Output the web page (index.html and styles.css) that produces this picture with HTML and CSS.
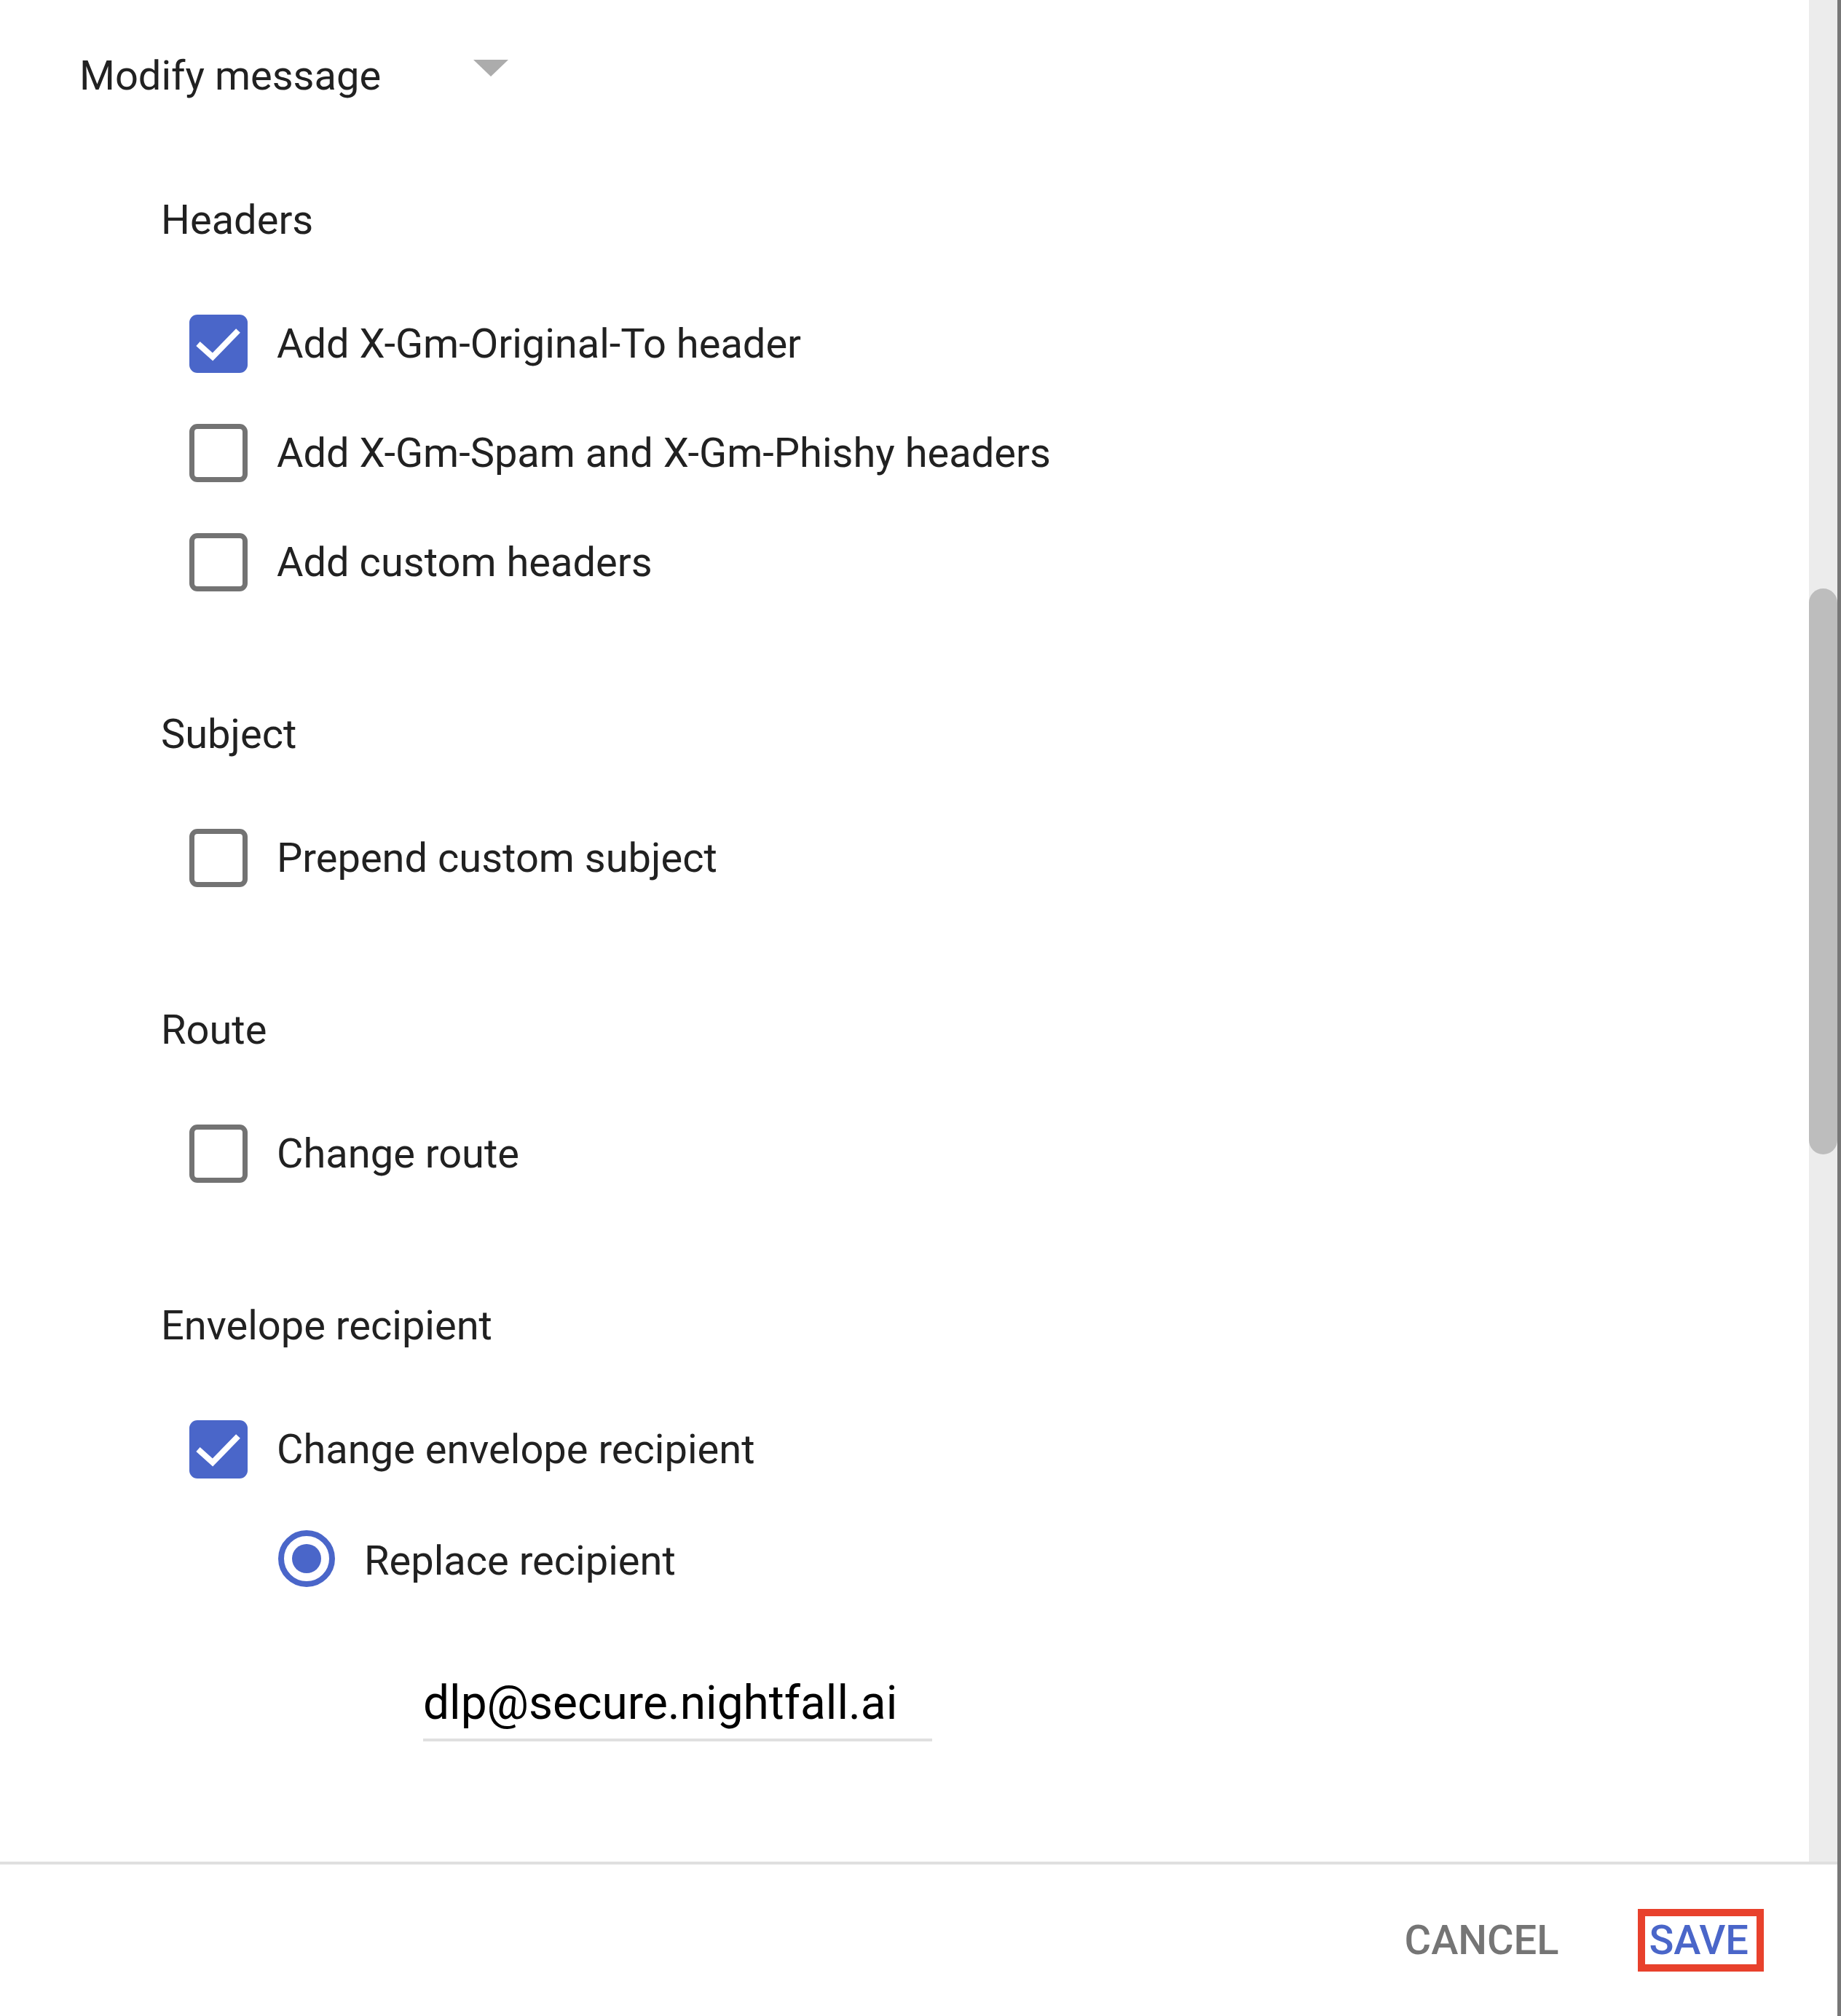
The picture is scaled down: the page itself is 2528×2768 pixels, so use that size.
FILE: index.html
```html
<!DOCTYPE html>
<html lang="en">
<head>
<meta charset="utf-8">
<title>Modify message</title>
<link rel="stylesheet" href="styles.css">
</head>
<body>
<div class="window">
  <div class="pane">
    <div class="scroller">
      <div class="content">
        <div class="title-row">
          <span class="title">Modify message</span>
          <span class="caret"></span>
        </div>

        <section class="section first">
          <div class="heading">Headers</div>
          <div class="options">
            <label class="row">
              <span class="box checked"><svg viewBox="0 0 80 80" width="80" height="80"><polyline points="12,40 32,58 67,22" fill="none" stroke="#fff" stroke-width="8"/></svg></span>
              <span class="label">Add X-Gm-Original-To header</span>
            </label>
            <label class="row">
              <span class="box"></span>
              <span class="label">Add X-Gm-Spam and X-Gm-Phishy headers</span>
            </label>
            <label class="row">
              <span class="box"></span>
              <span class="label">Add custom headers</span>
            </label>
          </div>
        </section>

        <section class="section">
          <div class="heading">Subject</div>
          <div class="options">
            <label class="row">
              <span class="box"></span>
              <span class="label">Prepend custom subject</span>
            </label>
          </div>
        </section>

        <section class="section">
          <div class="heading">Route</div>
          <div class="options">
            <label class="row">
              <span class="box"></span>
              <span class="label">Change route</span>
            </label>
          </div>
        </section>

        <section class="section">
          <div class="heading">Envelope recipient</div>
          <div class="options">
            <label class="row">
              <span class="box checked"><svg viewBox="0 0 80 80" width="80" height="80"><polyline points="12,40 32,58 67,22" fill="none" stroke="#fff" stroke-width="8"/></svg></span>
              <span class="label">Change envelope recipient</span>
            </label>
            <label class="row sub">
              <span class="radio"><span class="dot"></span></span>
              <span class="label sub-label">Replace recipient</span>
            </label>
            <div class="field">
              <span class="field-value">dlp@secure.nightfall.ai</span>
            </div>
          </div>
        </section>
      </div>
      <div class="track"><div class="thumb"></div></div>
    </div>
    <div class="footer">
      <button class="btn cancel">CANCEL</button>
      <button class="btn save">SAVE</button>
    </div>
  </div>
  <div class="edge"></div>
</div>
</body>
</html>
```

FILE: styles.css
```css
html, body {
  margin: 0;
  padding: 0;
  background: #ffffff;
}

body {
  font-family: Roboto, "Liberation Sans", Arial, sans-serif;
  color: #212121;
}

.window {
  display: flex;
  width: 2528px;
  height: 2768px;
}

.pane {
  flex: 1;
  display: flex;
  flex-direction: column;
  min-width: 0;
}

.edge {
  width: 5px;
  background: #777777;
}

.scroller {
  flex: 1;
  display: flex;
  min-height: 0;
}

.content {
  flex: 1;
  display: flex;
  flex-direction: column;
}

.track {
  width: 39px;
  background: #ececec;
}

.thumb {
  margin-top: 808px;
  height: 777px;
  background: #bdbdbd;
  border-radius: 20px;
}

.title-row {
  height: 208px;
  display: flex;
  align-items: center;
  padding-left: 109px;
}

.title {
  width: 541px;
  font-size: 56px;
  line-height: 66px;
}

.caret {
  width: 0;
  height: 0;
  border-left: 24px solid transparent;
  border-right: 24px solid transparent;
  border-top: 23px solid #acacac;
  margin-bottom: 22px;
}

.section {
  display: flex;
  flex-direction: column;
  margin-top: 111px;
  padding-left: 221px;
}

.section.first {
  margin-top: 44px;
}

.heading {
  height: 100px;
  display: flex;
  align-items: center;
  font-size: 56px;
}

.options {
  margin-top: 45px;
  display: flex;
  flex-direction: column;
  padding-left: 39px;
}

.row {
  height: 150px;
  display: flex;
  align-items: center;
  gap: 40px;
}

.label {
  font-size: 56px;
  color: #212121;
}

.sub-label {
  padding-top: 6px;
}

.box {
  box-sizing: border-box;
  width: 80px;
  height: 80px;
  border: 7px solid #737373;
  border-radius: 11px;
  flex: none;
  display: flex;
}

.box.checked {
  border: none;
  background: #4a66c9;
}

.row.sub {
  padding-left: 122px;
  gap: 40px;
}

.radio {
  box-sizing: border-box;
  width: 78px;
  height: 78px;
  border: 8px solid #4a66c9;
  border-radius: 50%;
  flex: none;
  display: flex;
  align-items: center;
  justify-content: center;
}

.dot {
  width: 40px;
  height: 40px;
  border-radius: 50%;
  background: #4a66c9;
}

.field {
  margin-top: 84px;
  margin-left: 321px;
  width: 699px;
  height: 80px;
  padding-bottom: 8px;
  border-bottom: 4px solid #e0e0e0;
  display: flex;
  align-items: center;
}

.field-value {
  font-size: 64px;
  line-height: 80px;
  color: #000000;
}

.footer {
  box-sizing: border-box;
  height: 212px;
  border-top: 4px solid #e0e0e0;
  display: flex;
  align-items: center;
  justify-content: flex-end;
  padding-right: 101px;
}

.btn {
  font-family: Roboto, "Liberation Sans", Arial, sans-serif;
  font-size: 56px;
  font-weight: 500;
  background: none;
  border: none;
  padding: 0;
  margin: 0;
  line-height: 66px;
}

.cancel {
  color: #757575;
  margin-right: 109px;
}

.save {
  color: #4a66c9;
  box-sizing: border-box;
  height: 86px;
  padding: 0 11px 0 5px;
  border: 10px solid #e8412c;
}
```
